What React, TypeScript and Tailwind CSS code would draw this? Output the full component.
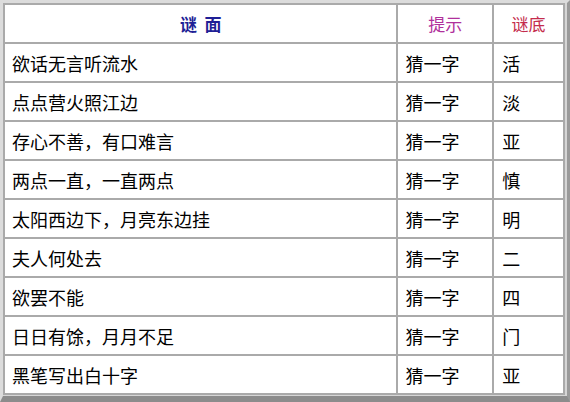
const rows: [string, string, string][] = [
  ["欲话无言听流水", "猜一字", "活"],
  ["点点营火照江边", "猜一字", "淡"],
  ["存心不善，有口难言", "猜一字", "亚"],
  ["两点一直，一直两点", "猜一字", "慎"],
  ["太阳西边下，月亮东边挂", "猜一字", "明"],
  ["夫人何处去", "猜一字", "二"],
  ["欲罢不能", "猜一字", "四"],
  ["日日有馀，月月不足", "猜一字", "门"],
  ["黑笔写出白十字", "猜一字", "亚"],
];

const font = { fontFamily: '"Noto Sans CJK SC", "Noto Sans", sans-serif' };

export default function App() {
  return (
    <div
      className="w-[570px] h-[402px] overflow-hidden bg-[#d6d6d6] border-t-[3px] border-l-[3px] border-r-[3px] border-b-[6px] border-t-[#dcdcdc] border-l-[#dcdcdc] border-r-[#9a9a9a] border-b-[#8c8c8c]"
      style={font}
    >
      <table className="w-[562px] border-collapse bg-white text-[18px] leading-none text-black">
        <colgroup>
          <col className="w-[395px]" />
          <col className="w-[96px]" />
          <col className="w-[71px]" />
        </colgroup>
        <thead>
          <tr className="h-[39px] text-[17px]">
            <th className="border-2 border-[#aaaaaa] text-center font-bold text-[#1f1f96]">
              谜&nbsp;&nbsp;面
            </th>
            <th className="border-2 border-[#aaaaaa] text-center font-normal text-[#b0309c]">
              提示
            </th>
            <th className="border-2 border-[#aaaaaa] text-center font-normal text-[#c42c4c]">
              谜底
            </th>
          </tr>
        </thead>
        <tbody>
          {rows.map(([q, hint, a], i) => (
            <tr key={i} className="h-[39px]">
              <td className="border-2 border-[#aaaaaa] pl-[7px]">{q}</td>
              <td className="border-2 border-[#aaaaaa] pl-[7px]">{hint}</td>
              <td className="border-2 border-[#aaaaaa] pl-[8px]">{a}</td>
            </tr>
          ))}
        </tbody>
      </table>
    </div>
  );
}
